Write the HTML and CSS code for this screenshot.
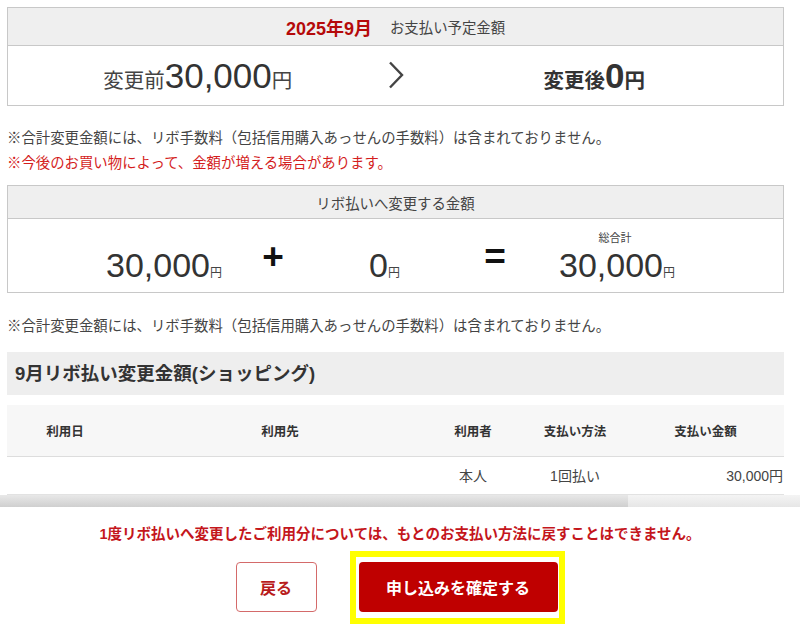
FILE: index.html
```html
<!DOCTYPE html>
<html lang="ja">
<head>
  <meta charset="UTF-8">
  <meta name="viewport" content="width=device-width, initial-scale=1.0">
  <title>リボ払い変更 確認</title>
  <link rel="stylesheet" href="styles.css">
</head>
<body>
  <div class="page">
    <section class="box">
      <div class="box-head">
        <span class="month">2025年9月</span>
        <span class="box-label">お支払い予定金額</span>
      </div>
      <div class="compare">
        <div class="before">
          <span class="label">変更前</span><span class="num">30,000</span><span class="yen">円</span>
        </div>
        <svg class="chevron" width="16" height="28" viewBox="0 0 16 28">
          <polyline points="2,1.5 14,14 2,26.5" fill="none" stroke="#444" stroke-width="2.4"/>
        </svg>
        <div class="after">
          <span class="label">変更後</span><span class="num">0</span><span class="yen">円</span>
        </div>
      </div>
    </section>

    <div class="notes">
      <p>※合計変更金額には、リボ手数料（包括信用購入あっせんの手数料）は含まれておりません。</p>
      <p class="warn">※今後のお買い物によって、金額が増える場合があります。</p>
    </div>

    <section class="box">
      <div class="box-head box-head-sm">
        <span class="box-label">リボ払いへ変更する金額</span>
      </div>
      <div class="sum">
        <div class="amount amount-a"><span class="num">30,000</span><span class="yen">円</span></div>
        <div class="op op-plus">+</div>
        <div class="amount amount-b"><span class="num">0</span><span class="yen">円</span></div>
        <div class="op op-eq">=</div>
        <div class="amount amount-total">
          <div class="total-label">総合計</div>
          <span class="num">30,000</span><span class="yen">円</span>
        </div>
      </div>
    </section>

    <div class="notes notes-single">
      <p>※合計変更金額には、リボ手数料（包括信用購入あっせんの手数料）は含まれておりません。</p>
    </div>

    <h2 class="section-title">9月リボ払い変更金額(ショッピング)</h2>

    <table class="detail">
      <colgroup>
        <col class="c-date">
        <col class="c-shop">
        <col class="c-user">
        <col class="c-method">
        <col class="c-price">
      </colgroup>
      <thead>
        <tr>
          <th>利用日</th>
          <th>利用先</th>
          <th>利用者</th>
          <th>支払い方法</th>
          <th>支払い金額</th>
        </tr>
      </thead>
      <tbody>
        <tr>
          <td></td>
          <td></td>
          <td class="center">本人</td>
          <td class="center">1回払い</td>
          <td class="right">30,000円</td>
        </tr>
      </tbody>
    </table>
  </div>

  <div class="scrollbar"><div class="thumb"></div></div>

  <footer class="footer">
    <p class="footer-warn">1度リボ払いへ変更したご利用分については、もとのお支払い方法に戻すことはできません。</p>
    <div class="actions">
      <button class="btn btn-back">戻る</button>
      <div class="highlight">
        <button class="btn btn-submit">申し込みを確定する</button>
      </div>
    </div>
  </footer>
</body>
</html>
```

FILE: styles.css
```css
* {
  margin: 0;
  padding: 0;
  box-sizing: border-box;
}

body {
  font-family: "Liberation Sans", "Noto Sans CJK JP", sans-serif;
  color: #333;
  background: #fff;
  width: 800px;
  height: 628px;
  overflow: hidden;
}

.page {
  padding: 7px 16px 0 7px;
}

/* summary boxes */
.box {
  border: 1px solid #c8c8c8;
}

.box-head {
  height: 38px;
  background: #efefef;
  border-bottom: 1px solid #c8c8c8;
  display: flex;
  align-items: center;
  justify-content: center;
  gap: 18px;
}

.box-head-sm {
  height: 33px;
}

.month {
  color: #b50a0a;
  font-size: 18px;
  font-weight: bold;
}

.box-label {
  font-size: 14.4px;
  color: #444;
}

.compare {
  height: 59px;
  display: grid;
  grid-template-columns: 1fr 16px 1fr;
  align-items: center;
}

.before,
.after {
  text-align: center;
  white-space: nowrap;
}

.before .label {
  font-size: 20.5px;
  color: #444;
}

.before .num {
  font-size: 35px;
  color: #333;
}

.before .yen {
  font-size: 20.5px;
  color: #444;
}

.after {
  font-weight: bold;
  padding-left: 2px;
}

.after .label,
.after .yen {
  font-size: 20.5px;
}

.after .num {
  font-size: 35px;
}

.chevron {
  display: block;
  margin-top: -2px;
}

/* notes */
.notes {
  margin: 20px 0 9px;
  font-size: 14.4px;
  line-height: 25px;
  color: #444;
}

.notes .warn {
  color: #d41d1d;
}

.notes-single {
  margin: 21px 0 13px;
}

/* sum row */
.sum {
  height: 73px;
  display: flex;
  align-items: flex-end;
  padding-bottom: 9px;
}

.amount {
  white-space: nowrap;
}

.amount .num {
  font-size: 34px;
  line-height: 36px;
  color: #333;
}

.amount .yen {
  font-size: 12px;
  color: #444;
}

.amount-a {
  width: 214px;
  text-align: right;
}

.amount-b {
  width: 116px;
  text-align: right;
}

.amount-total {
  margin-left: 53px;
  text-align: center;
}

.total-label {
  font-size: 11px;
  line-height: 14px;
  color: #444;
  margin-bottom: 2px;
  padding-right: 4px;
}

.op {
  width: 22px;
  font-size: 37px;
  font-weight: bold;
  line-height: 37px;
  color: #111;
  text-align: center;
  align-self: flex-start;
  margin-top: 19px;
}

.op-plus {
  margin-left: 40px;
}

.op-eq {
  margin-left: 84px;
}

/* detail table */
.section-title {
  height: 43px;
  background: #eee;
  font-size: 18.5px;
  font-weight: bold;
  line-height: 43px;
  padding-left: 8px;
  color: #333;
  margin-bottom: 10px;
}

.detail {
  width: 100%;
  border-collapse: collapse;
  table-layout: fixed;
  font-size: 14px;
}

.c-date { width: 116px; }
.c-shop { width: 314px; }
.c-user { width: 72px; }
.c-method { width: 132px; }

.detail th {
  height: 51px;
  background: #f7f7f7;
  border-bottom: 1px solid #ddd;
  font-size: 12.5px;
  font-weight: bold;
  color: #333;
  text-align: center;
}

.detail th:last-child {
  padding-right: 14px;
}

.detail td {
  height: 38px;
  border-bottom: 1px solid #e2e2e2;
  color: #444;
}

.detail .center {
  text-align: center;
}

.detail .right {
  text-align: right;
  padding-right: 1px;
}

.scrollbar {
  height: 12px;
  background: linear-gradient(#f4f4f4, #e6e6e6);
}

.thumb {
  width: 628px;
  height: 100%;
  background: linear-gradient(#e8e8e8, #cfcfcf);
}

/* fixed footer */
.footer {
  height: 123px;
  padding-top: 17px;
  background: #fff;
}

.footer-warn {
  text-align: center;
  color: #c4161c;
  font-size: 14.5px;
  font-weight: bold;
  line-height: 20px;
}

.actions {
  margin-top: 7px;
  display: flex;
  justify-content: center;
  align-items: flex-start;
  gap: 33px;
}

.btn {
  font-family: inherit;
  font-size: 16px;
  font-weight: bold;
  height: 50px;
  border-radius: 4px;
  cursor: pointer;
}

.btn-back {
  width: 81px;
  margin-top: 11px;
  background: #fff;
  color: #b81c1c;
  border: 1px solid #d46a6a;
}

.highlight {
  border: 6px solid #ffff00;
  padding: 5px 1px 6px 3px;
}

.btn-submit {
  display: block;
  width: 199px;
  background: #bf0000;
  color: #fff;
  border: none;
}
```
